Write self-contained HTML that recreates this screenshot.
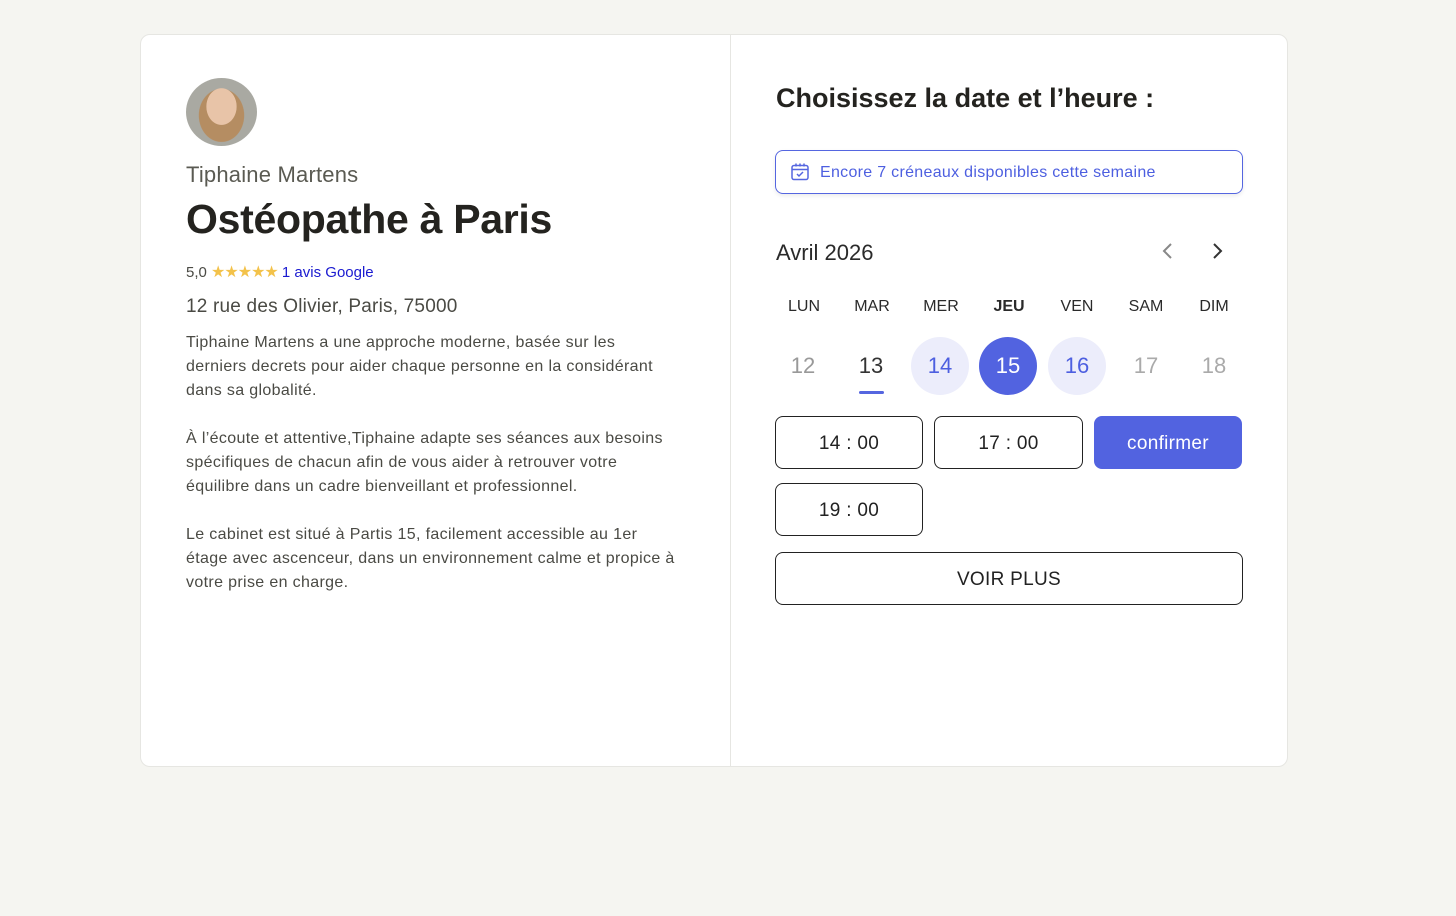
<!DOCTYPE html>
<html><head><meta charset="utf-8"><style>
*{box-sizing:border-box;margin:0;padding:0}
body{width:1456px;height:916px;background:#f5f5f1;font-family:"Liberation Sans",sans-serif;position:relative;overflow:hidden}
.card{position:absolute;left:140px;top:34px;width:1148px;height:733px;background:#fff;border:1px solid #e6e6e2;border-radius:10px}
.div{position:absolute;left:730px;top:35px;width:1px;height:731px;background:#e6e6e2}
.a{position:absolute;white-space:nowrap}
.av{left:186px;top:78px;width:71px;height:68px;border-radius:50%;background:radial-gradient(ellipse 30% 38% at 50% 42%,#e8c4a8 0 70%,transparent 72%),radial-gradient(ellipse 45% 55% at 50% 55%,#b58d62 0 70%,transparent 72%),#a9a9a2}
.p{font-size:16px;color:#4a4a44;line-height:24px;left:186px;letter-spacing:0.35px}
.day{position:absolute;top:337px;width:58px;height:58px;border-radius:50%;text-align:center;line-height:58px;font-size:22px;color:#999}
.dn{position:absolute;top:298px;width:58px;text-align:center;font-size:16px;color:#2a2a2a}
.slot{position:absolute;border:1.5px solid #222;border-radius:8px;text-align:center;font-size:19px;color:#222;height:53px;line-height:53px;letter-spacing:0.3px}
</style></head><body>
<div class="card"></div><div class="div"></div>
<div class="a av"></div>
<div class="a" style="left:186px;top:162px;font-size:22px;color:#5a5a52;letter-spacing:0.2px">Tiphaine Martens</div>
<div class="a" style="left:186px;top:196px;font-size:41px;font-weight:bold;color:#24231f;letter-spacing:-0.3px">Ostéopathe à Paris</div>
<div class="a" style="left:186px;top:262px;font-size:15px;color:#4a4a44">5,0 <span style="color:#f3c24a;font-size:16px;letter-spacing:-1px">★★★★★</span> <span style="color:#1a1ad0">1 avis Google</span></div>
<div class="a" style="left:186px;top:296px;font-size:19px;color:#4a4a44;letter-spacing:0.2px">12 rue des Olivier, Paris, 75000</div>
<div class="a p" style="top:331px">Tiphaine Martens a une approche moderne, basée sur les<br>derniers decrets pour aider chaque personne en la considérant<br>dans sa globalité.</div>
<div class="a p" style="top:427px">À l’écoute et attentive,Tiphaine adapte ses séances aux besoins<br>spécifiques de chacun afin de vous aider à retrouver votre<br>équilibre dans un cadre bienveillant et professionnel.</div>
<div class="a p" style="top:523px">Le cabinet est situé à Partis 15, facilement accessible au 1er<br>étage avec ascenceur, dans un environnement calme et propice à<br>votre prise en charge.</div>

<div class="a" style="left:776px;top:83px;font-size:27px;font-weight:bold;color:#24231f">Choisissez la date et l’heure :</div>
<div class="a" style="left:775px;top:150px;width:468px;height:44px;border:1.5px solid #5566e0;border-radius:8px;box-shadow:0 2px 4px rgba(0,0,0,.08)">
<svg style="position:absolute;left:14px;top:11px" width="20" height="20" viewBox="0 0 20 20" fill="none" stroke="#5566e0" stroke-width="1.5"><rect x="2" y="3.5" width="16" height="14" rx="2"/><path d="M2 7.5h16M6 1.5v3M10 1.5v3M14 1.5v3M7 12l2 2 4-4"/></svg>
<span style="position:absolute;left:44px;top:13px;font-size:16px;color:#4d5fe0;letter-spacing:0.3px">Encore 7 créneaux disponibles cette semaine</span></div>
<div class="a" style="left:776px;top:240px;font-size:22px;color:#2a2a2a">Avril 2026</div>
<svg class="a" style="left:1160px;top:242px" width="16" height="18" viewBox="0 0 16 18" fill="none" stroke="#888" stroke-width="2"><path d="M11 2 4 9l7 7"/></svg>
<svg class="a" style="left:1209px;top:242px" width="16" height="18" viewBox="0 0 16 18" fill="none" stroke="#333" stroke-width="2"><path d="M5 2l7 7-7 7"/></svg>
<div class="dn" style="left:775px">LUN</div><div class="dn" style="left:843px">MAR</div><div class="dn" style="left:912px">MER</div><div class="dn" style="left:980px;font-weight:bold">JEU</div><div class="dn" style="left:1048px">VEN</div><div class="dn" style="left:1117px">SAM</div><div class="dn" style="left:1185px">DIM</div>
<div class="day" style="left:774px">12</div>
<div class="day" style="left:842px;color:#333">13</div>
<div class="a" style="left:859px;top:391px;width:25px;height:3px;border-radius:2px;background:#5566e0"></div>
<div class="day" style="left:911px;background:#ecedfb;color:#4d5fe0">14</div>
<div class="day" style="left:979px;background:#5263e0;color:#fff">15</div>
<div class="day" style="left:1048px;background:#ecedfb;color:#4d5fe0">16</div>
<div class="day" style="left:1117px;color:#aaa">17</div>
<div class="day" style="left:1185px;color:#aaa">18</div>
<div class="slot" style="left:775px;top:416px;width:148px">14 : 00</div>
<div class="slot" style="left:934px;top:416px;width:149px">17 : 00</div>
<div class="slot" style="left:1094px;top:416px;width:148px;background:#5263e0;border-color:#5263e0;color:#fff">confirmer</div>
<div class="slot" style="left:775px;top:483px;width:148px">19 : 00</div>
<div class="slot" style="left:775px;top:552px;width:468px">VOIR PLUS</div>
</body></html>
